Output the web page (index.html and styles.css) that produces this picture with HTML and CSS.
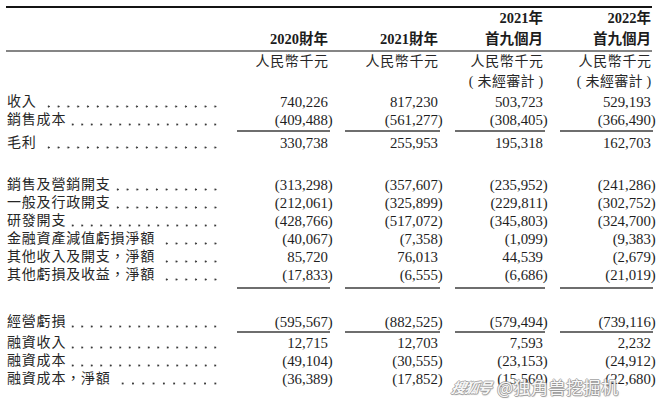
FILE: index.html
```html
<!DOCTYPE html>
<html lang="zh-Hant">
<head>
<meta charset="utf-8">
<title>財務資料</title>
<link rel="stylesheet" href="styles.css">
</head>
<body>
<div class="sheet">
  <div class="head">
    <div class="grid hrow">
      <div></div>
      <div class="hc">2020財年</div>
      <div class="hc">2021財年</div>
      <div class="hc">2021年<br>首九個月</div>
      <div class="hc">2022年<br>首九個月</div>
    </div>
  </div>
  <div class="grid units">
    <div></div>
    <div class="uc">人民幣千元</div>
    <div class="uc">人民幣千元</div>
    <div class="uc">人民幣千元<br><span class="ua">( 未經審計 )</span></div>
    <div class="uc">人民幣千元<br><span class="ua">( 未經審計 )</span></div>
  </div>

  <div class="grid row first">
    <div class="lab"><span>收入</span><i class="dots sp"></i></div>
    <div class="num">740,226</div><div class="num">817,230</div><div class="num">503,723</div><div class="num">529,193</div>
  </div>
  <div class="grid row">
    <div class="lab"><span>銷售成本</span><i class="dots"></i></div>
    <div class="num neg">(409,488)</div><div class="num neg">(561,277)</div><div class="num neg">(308,405)</div><div class="num neg">(366,490)</div>
  </div>
  <div class="grid rule r1"><div></div><div class="ln"></div><div class="ln"></div><div class="ln"></div><div class="ln"></div></div>
  <div class="grid row">
    <div class="lab"><span>毛利</span><i class="dots sp"></i></div>
    <div class="num">330,738</div><div class="num">255,953</div><div class="num">195,318</div><div class="num">162,703</div>
  </div>

  <div class="grid row gap">
    <div class="lab"><span>銷售及營銷開支</span><i class="dots"></i></div>
    <div class="num neg">(313,298)</div><div class="num neg">(357,607)</div><div class="num neg">(235,952)</div><div class="num neg">(241,286)</div>
  </div>
  <div class="grid row">
    <div class="lab"><span>一般及行政開支</span><i class="dots"></i></div>
    <div class="num neg">(212,061)</div><div class="num neg">(325,899)</div><div class="num neg">(229,811)</div><div class="num neg">(302,752)</div>
  </div>
  <div class="grid row">
    <div class="lab"><span>研發開支</span><i class="dots"></i></div>
    <div class="num neg">(428,766)</div><div class="num neg">(517,072)</div><div class="num neg">(345,803)</div><div class="num neg">(324,700)</div>
  </div>
  <div class="grid row">
    <div class="lab"><span>金融資產減值虧損淨額</span><i class="dots sp"></i></div>
    <div class="num neg">(40,067)</div><div class="num neg">(7,358)</div><div class="num neg">(1,099)</div><div class="num neg">(9,383)</div>
  </div>
  <div class="grid row">
    <div class="lab"><span>其他收入及開支，淨額</span><i class="dots sp"></i></div>
    <div class="num">85,720</div><div class="num">76,013</div><div class="num">44,539</div><div class="num neg">(2,679)</div>
  </div>
  <div class="grid row">
    <div class="lab"><span>其他虧損及收益，淨額</span><i class="dots sp"></i></div>
    <div class="num neg">(17,833)</div><div class="num neg">(6,555)</div><div class="num neg">(6,686)</div><div class="num neg">(21,019)</div>
  </div>
  <div class="grid rule r2"><div></div><div class="ln"></div><div class="ln"></div><div class="ln"></div><div class="ln"></div></div>

  <div class="grid row gap2">
    <div class="lab"><span>經營虧損</span><i class="dots"></i></div>
    <div class="num neg">(595,567)</div><div class="num neg">(882,525)</div><div class="num neg">(579,494)</div><div class="num neg">(739,116)</div>
  </div>
  <div class="grid rule r3"><div></div><div class="ln"></div><div class="ln"></div><div class="ln"></div><div class="ln"></div></div>
  <div class="grid row">
    <div class="lab"><span>融資收入</span><i class="dots"></i></div>
    <div class="num">12,715</div><div class="num">12,703</div><div class="num">7,593</div><div class="num">2,232</div>
  </div>
  <div class="grid row">
    <div class="lab"><span>融資成本</span><i class="dots"></i></div>
    <div class="num neg">(49,104)</div><div class="num neg">(30,555)</div><div class="num neg">(23,153)</div><div class="num neg">(24,912)</div>
  </div>
  <div class="grid row">
    <div class="lab"><span>融資成本，淨額</span><i class="dots sp"></i></div>
    <div class="num neg">(36,389)</div><div class="num neg">(17,852)</div><div class="num neg">(15,560)</div><div class="num neg">(22,680)</div>
  </div>
</div>
<div class="wm"><span class="wm-logo">搜狐号</span><span class="wm-name">@独角兽挖掘机</span></div>
</body>
</html>
```

FILE: styles.css
```css
html, body {
  margin: 0;
  padding: 0;
  background: #ffffff;
}
body {
  position: relative;
  width: 660px;
  height: 402px;
  overflow: hidden;
  font-family: "Liberation Serif", "Noto Sans CJK TC", serif;
  color: #222;
}
.sheet {
  margin: 6px 0 0 6px;
  width: 646px;
}
.grid {
  display: grid;
  grid-template-columns: 214px 91px 93px 88px 91px;
  column-gap: 17px;
}
.head {
  border-top: 2px solid #141414;
  border-bottom: 2px solid #858585;
}
.hrow {
  align-items: end;
}
.hc {
  text-align: right;
  font-weight: 700;
  font-size: 14.5px;
  line-height: 21px;
  color: #1c1c1c;
}
.units {
  align-items: start;
}
.uc {
  text-align: right;
  font-size: 14px;
  line-height: 20px;
  letter-spacing: 0.6px;
  margin-right: -0.6px;
  color: #262626;
}
.ua {
  letter-spacing: 0.3px;
}
.row {
  height: 18px;
  line-height: 18px;
  font-size: 14.8px;
}
.row.first { margin-top: 1px; }
.row.gap { margin-top: 24px; }
.row.gap2 { margin-top: 24px; }
.lab {
  display: flex;
  align-items: flex-end;
  padding-left: 1px;
  font-size: 14px;
  letter-spacing: 0.8px;
  color: #262626;
  white-space: nowrap;
}
.lab span {
  line-height: 18px;
}
.dots {
  flex: 1;
  height: 3px;
  margin: 0 0 3px 2px;
  background-image: radial-gradient(circle, #3a3a3a 0.8px, rgba(0,0,0,0) 1.3px);
  background-size: 9.3px 3px;
  background-repeat: space no-repeat;
  background-position: right bottom;
}
.dots.sp {
  margin-left: 7px;
}
.num {
  text-align: right;
  white-space: nowrap;
  color: #1e1e1e;
}
.num.neg {
  margin-right: -4.8px;
}
.rule .ln {
  border-top: 2px solid #6e6e6e;
}
.rule.r1 { margin: 1px 0 2px; }
.rule.r2 { margin: 3px 0 0; }
.rule.r3 { margin: 0 0 1px; }
.rule.r1 .ln, .rule.r2 .ln, .rule.r3 .ln {
  margin-right: -2px;
}

.wm {
  position: absolute;
  left: 452px;
  top: 374px;
  display: flex;
  align-items: center;
  gap: 6px;
  font-family: "Noto Sans CJK SC", "Noto Sans", sans-serif;
  color: rgba(255,255,255,0.95);
  text-shadow:
    1px 0 0 rgba(150,150,150,0.75),
    -1px 0 0 rgba(150,150,150,0.75),
    0 1px 0 rgba(150,150,150,0.75),
    0 -1px 0 rgba(150,150,150,0.75),
    1px 1px 1px rgba(120,120,120,0.5);
}
.wm-logo {
  font-size: 14px;
  font-weight: 700;
  font-style: italic;
  letter-spacing: -1px;
  transform: skewX(-12deg);
}
.wm-name {
  font-size: 17px;
  letter-spacing: 0.5px;
}
```
